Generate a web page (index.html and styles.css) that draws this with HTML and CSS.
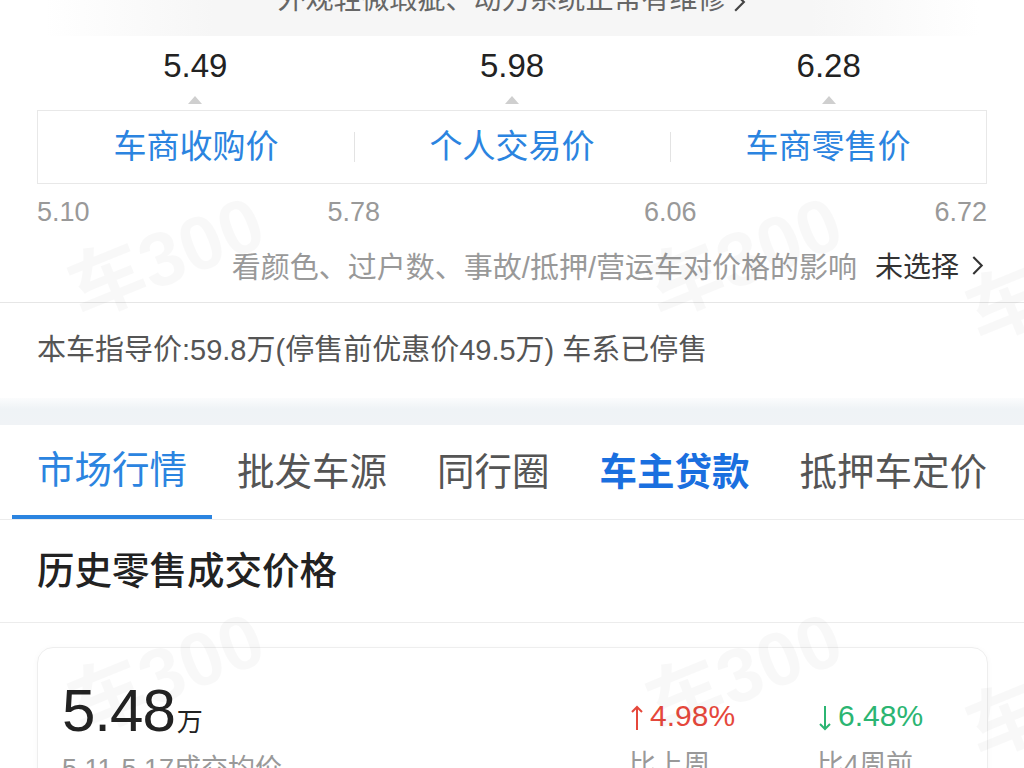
FILE: index.html
```html
<!DOCTYPE html>
<html lang="zh-CN">
<head>
    <meta charset="UTF-8">
    <meta name="viewport" content="width=device-width, initial-scale=1.0">
    <title>车辆估值</title>
    <link rel="stylesheet" href="styles.css">
</head>
<body>

<div class="page">
    <!-- Valuation block -->
    <div class="valuation">
        <div class="hint">
            <div class="hint-text">外观轻微瑕疵、动力系统正常有维修
                <svg class="chev" viewBox="0 0 12 20" width="13" height="22"><polyline points="2,2 10,10 2,18" fill="none" stroke="#444" stroke-width="2"/></svg>
            </div>
        </div>

        <div class="prices">
            <div class="price-values">
                <div class="price-val">5.49</div>
                <div class="price-val">5.98</div>
                <div class="price-val">6.28</div>
            </div>
            <div class="markers">
                <div class="marker"><span class="tri"></span></div>
                <div class="marker"><span class="tri"></span></div>
                <div class="marker"><span class="tri"></span></div>
            </div>
            <div class="price-box">
                <div class="price-type">车商收购价</div>
                <div class="price-type">个人交易价</div>
                <div class="price-type">车商零售价</div>
            </div>
            <div class="scale">
                <span class="scale-first">5.10</span>
                <span class="scale-mid">5.78</span>
                <span class="scale-mid">6.06</span>
                <span class="scale-last">6.72</span>
            </div>
            <div class="options">
                <span class="options-label">看颜色、过户数、事故/抵押/营运车对价格的影响</span>
                <span class="options-value">未选择</span>
                <svg class="chev" viewBox="0 0 12 20" width="13" height="21"><polyline points="2,2 10,10 2,18" fill="none" stroke="#333" stroke-width="2"/></svg>
            </div>
        </div>
    </div>

    <div class="guide">本车指导价:59.8万(停售前优惠价49.5万) 车系已停售</div>

    <div class="band"></div>

    <!-- Tabs -->
    <div class="tabs">
        <div class="tab active">市场行情</div>
        <div class="tab">批发车源</div>
        <div class="tab">同行圈</div>
        <div class="tab strong">车主贷款</div>
        <div class="tab">抵押车定价</div>
    </div>

    <div class="section-title">历史零售成交价格</div>

    <div class="card-wrap">
        <div class="card">
            <div class="card-main">
                <div class="avg"><span class="avg-num">5.48</span><span class="avg-unit">万</span></div>
                <div class="card-sub">5.11-5.17成交均价</div>
            </div>
            <div class="stat">
                <div class="stat-val up">
                    <svg class="arrow" viewBox="0 0 12 26" width="12" height="26"><path d="M6 25V2M1 7l5-5 5 5" fill="none" stroke="currentColor" stroke-width="2"/></svg>4.98%
                </div>
                <div class="card-sub">比上周</div>
            </div>
            <div class="stat">
                <div class="stat-val down">
                    <svg class="arrow" viewBox="0 0 12 26" width="12" height="26"><path d="M6 1v23M1 19l5 5 5-5" fill="none" stroke="currentColor" stroke-width="2"/></svg>6.48%
                </div>
                <div class="card-sub">比4周前</div>
            </div>
        </div>
    </div>

    <!-- faint watermark layer -->
    <div class="watermarks">
        <span class="wm wm1">车300</span>
        <span class="wm wm2">车300</span>
        <span class="wm wm3">车300</span>
        <span class="wm wm4">车300</span>
        <span class="wm wm5">车300</span>
        <span class="wm wm6">车300</span>
    </div>
</div>

</body>
</html>
```

FILE: styles.css
```css
body {
    margin: 0;
    font-family: "Liberation Sans", "Noto Sans CJK SC", sans-serif;
    background-color: white;
    color: #333;
}
.page {
    position: relative;
    width: 1024px;
    height: 768px;
    overflow: hidden;
}
.valuation {
    border-bottom: 1px solid #e6e6e6;
}
.hint {
    height: 36px;
    margin: 0 45px;
    overflow: hidden;
    background: linear-gradient(to right, #fff, #f6f6f6 18%, #f6f6f6 82%, #fff);
}
.hint-text {
    margin-top: -20px;
    line-height: 40px;
    font-size: 28px;
    color: #666;
    text-align: center;
}
.chev {
    vertical-align: middle;
}
.prices {
    margin: 0 37px;
}
.price-values {
    display: flex;
    height: 58px;
    align-items: flex-end;
}
.price-val {
    flex: 1;
    text-align: center;
    font-size: 33px;
    color: #222;
    line-height: 56px;
}
.markers {
    display: flex;
    height: 16px;
}
.marker {
    flex: 1;
    display: flex;
    justify-content: center;
    padding-top: 2px;
}
.tri {
    width: 0;
    height: 0;
    border-left: 7px solid transparent;
    border-right: 7px solid transparent;
    border-bottom: 8px solid #cfcfcf;
}
.price-box {
    display: flex;
    height: 72px;
    border: 1px solid #e8e8e8;
    align-items: center;
}
.price-type {
    flex: 1;
    text-align: center;
    font-size: 33px;
    line-height: 40px;
    color: #2b84e0;
    position: relative;
}
.price-type + .price-type::before {
    content: "";
    position: absolute;
    left: 0;
    top: 50%;
    height: 30px;
    margin-top: -15px;
    border-left: 1px solid #e3e3e3;
}
.scale {
    display: grid;
    grid-template-columns: repeat(6, 1fr);
    height: 56px;
    align-items: center;
    font-size: 27px;
    color: #999;
}
.scale-first {
    justify-self: start;
}
.scale-mid {
    justify-self: center;
}
.scale-mid:nth-child(2) {
    grid-column: 2 / span 2;
}
.scale-mid:nth-child(3) {
    grid-column: 4 / span 2;
}
.scale-last {
    grid-column: 6;
    justify-self: end;
}
.options {
    display: flex;
    justify-content: flex-end;
    align-items: center;
    height: 50px;
    margin-bottom: 12px;
    font-size: 28px;
}
.options-label {
    color: #999;
    font-size: 29px;
}
.options-value {
    color: #333;
    margin-left: 18px;
    margin-right: 12px;
}
.options .chev {
    margin-right: 3px;
}
.guide {
    height: 95px;
    line-height: 95px;
    padding: 0 37px;
    font-size: 29px;
    color: #555;
}
.band {
    height: 27px;
    background: linear-gradient(#fbfcfd, #eff3f6 40%, #f0f3f6);
}
.tabs {
    display: flex;
    padding-left: 12px;
    border-bottom: 1px solid #ececec;
}
.tab {
    height: 94px;
    line-height: 94px;
    padding: 0 25px;
    font-size: 37.5px;
    color: #555;
    box-sizing: border-box;
}
.tab.active {
    color: #2b84e0;
    border-bottom: 4px solid #2b84e0;
    line-height: 90px;
}
.tab.strong {
    color: #1a6fdf;
    font-weight: bold;
}
.section-title {
    height: 102px;
    line-height: 102px;
    padding: 0 37px;
    font-size: 37.5px;
    font-weight: 500;
    color: #222;
    border-bottom: 1px solid #ececec;
}
.card-wrap {
    padding: 24px 36px 0 37px;
}
.card {
    display: flex;
    border: 1px solid #eeeeee;
    border-radius: 16px;
    padding: 31px 0 20px 24px;
    box-shadow: 0 1px 6px rgba(0, 0, 0, 0.03);
}
.card-main {
    flex: 1;
}
.avg {
    height: 64px;
    line-height: 64px;
    color: #222;
}
.avg-num {
    font-size: 60px;
    letter-spacing: -1px;
}
.avg-unit {
    font-size: 26px;
    margin-left: 2px;
}
.card-sub {
    margin-top: 8px;
    font-size: 27px;
    line-height: 36px;
    color: #999;
}
.stat {
    width: 188px;
    padding-top: 9px;
}
.stat:last-child {
    width: 170px;
}
.stat-val {
    display: flex;
    align-items: center;
    height: 55px;
    font-size: 30px;
}
.arrow {
    margin: 4px 7px 0 2px;
}
.stat .card-sub {
    margin-top: 4px;
}
.up {
    color: #e5473b;
}
.down {
    color: #2bb572;
}
.watermarks {
    position: absolute;
    left: 0;
    top: 0;
    width: 100%;
    height: 100%;
    pointer-events: none;
}
.wm {
    position: absolute;
    font-size: 76px;
    font-weight: bold;
    color: rgba(0, 0, 0, 0.028);
    transform: rotate(-22deg);
    white-space: nowrap;
}
.wm1 { left: 62px; top: 196px; }
.wm2 { left: 640px; top: 196px; }
.wm3 { left: 960px; top: 220px; }
.wm4 { left: 62px; top: 612px; }
.wm5 { left: 640px; top: 612px; }
.wm6 { left: 960px; top: 636px; }
```
